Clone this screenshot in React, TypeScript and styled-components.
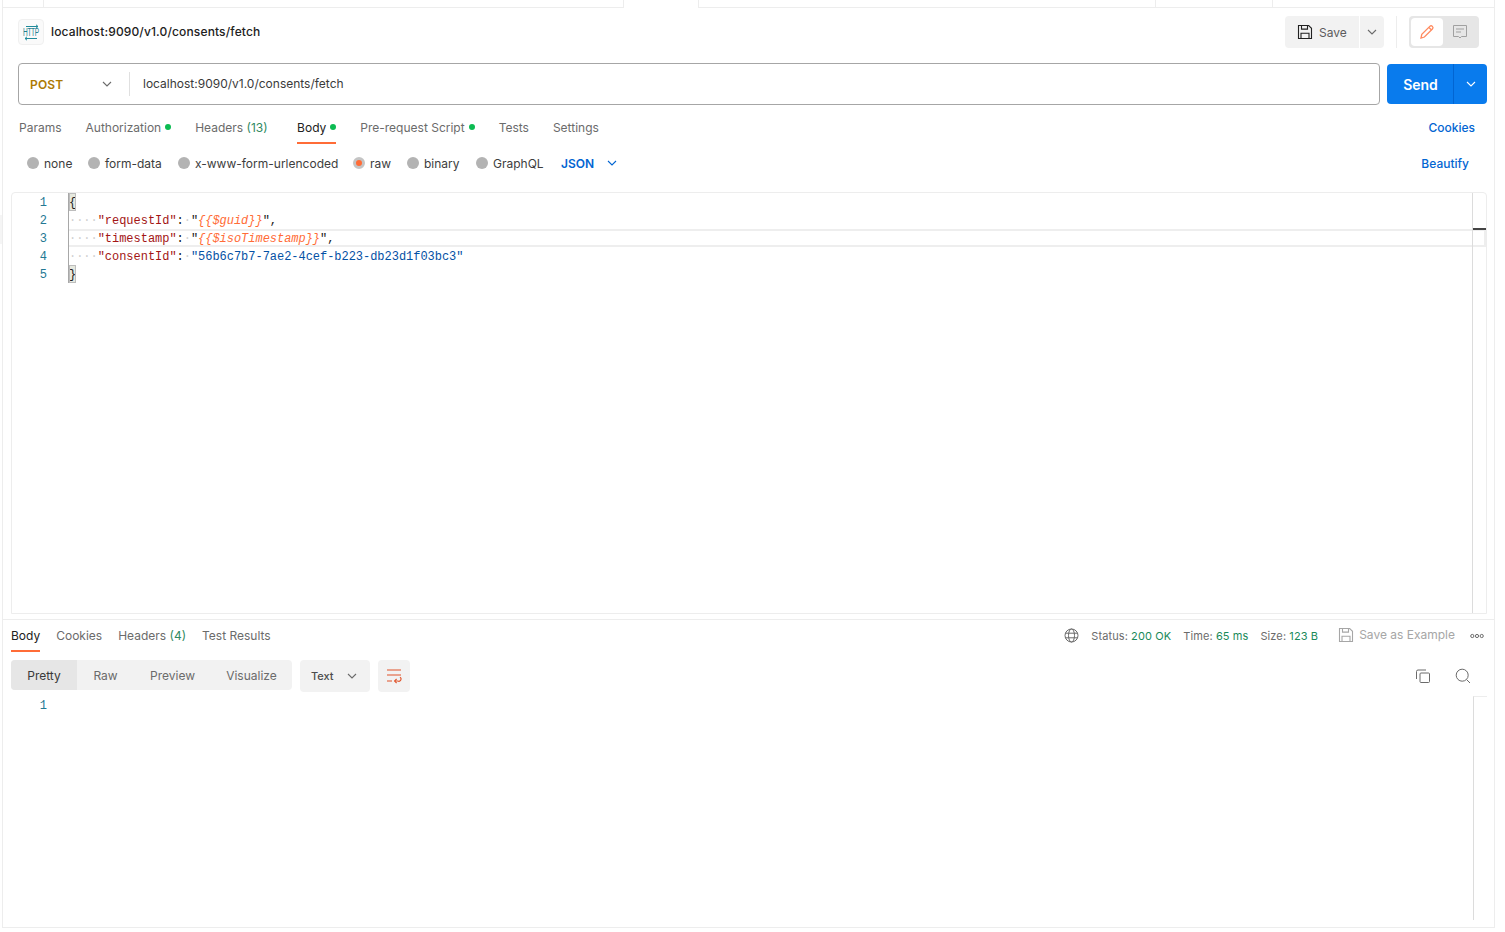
import React from "react";
import styled, { createGlobalStyle } from "styled-components";

const Global = createGlobalStyle`
  html, body { margin: 0; padding: 0; background: #fff; }
  body { font-family: Inter, "Liberation Sans", sans-serif; font-size: 12px; color: #6b6b6b; }
  * { box-sizing: border-box; }
`;

const Page = styled.div`position: relative; width: 1505px; height: 932px; overflow: hidden; background: #fff;`;
const Handle = styled.div`position: absolute; left: 0; top: 215px; width: 2px; height: 29px; background: #f5f5f5;`;
const Frame = styled.div`
  margin-left: 2px; width: 1493px; height: 928px;
  border-left: 1px solid #ededed; border-right: 1px solid #ededed; border-bottom: 1px solid #ededed;
  display: flex; flex-direction: column;
`;

const TabStrip = styled.div`display: flex; height: 8px; flex: none;`;
const StripCell = styled.div<{ $w?: number; $active?: boolean }>`
  flex: ${p => (p.$w ? `0 0 ${p.$w}px` : "1")};
  border-bottom: ${p => (p.$active ? "none" : "1px solid #ededed")};
  border-right: ${p => (p.$w ? "1px solid #ededed" : "none")};
`;

const Header = styled.div`height: 48px; flex: none; display: flex; align-items: center; padding: 0 15px; justify-content: space-between;`;
const Crumb = styled.div`display: flex; align-items: center; gap: 7px;`;
const HttpIcon = styled.div`
  width: 26px; height: 26px; border: 1px solid #f0f0f0; border-radius: 4px; background: #fafafa;
  display: flex; flex-direction: column; align-items: center; justify-content: center;
`;
const HttpLabel = styled.span`
  font-family: "Liberation Sans", sans-serif; font-size: 10px; line-height: 9px; height: 9px; color: #1f7f8f;
  letter-spacing: -0.6px; margin: -1px 0; transform: scaleX(0.66);
`;
const Title = styled.span`font-size: 12px; font-weight: 500; color: #212121; letter-spacing: 0.14px; padding-bottom: 1px;`;
const Actions = styled.div`display: flex; align-items: center;`;
const SaveBtn = styled.div`
  width: 74px; height: 32px; background: #f2f2f2; border-radius: 4px 0 0 4px; display: flex; align-items: center;
  padding-left: 12px; gap: 6px; color: #5c5c5c; font-size: 12px; margin-right: 1px;
`;
const SaveCaret = styled.div`
  width: 24px; height: 32px; background: #f2f2f2; border-radius: 0 4px 4px 0;
  display: flex; align-items: center; justify-content: center;
`;
const VDivider = styled.div`width: 1px; height: 32px; background: #ededed; margin: 0 12px;`;
const Toggle = styled.div`
  width: 70px; height: 32px; background: #e6e6e6; border-radius: 4px; padding: 2px; display: flex; align-items: center;
`;
const ToggleOn = styled.div`
  width: 32px; height: 28px; background: #fff; border-radius: 4px; display: flex; align-items: center; justify-content: center;
`;
const ToggleOff = styled.div`flex: 1; height: 28px; display: flex; align-items: center; justify-content: center;`;

const UrlRow = styled.div`flex: none; margin-top: 7px; padding: 0 7px 0 15px; display: flex; align-items: center; gap: 7px; height: 42px;`;
const UrlBar = styled.div`
  flex: 1; height: 42px; border: 1px solid #a6a6a6; border-radius: 4px; display: flex; align-items: center;
`;
const Method = styled.div`
  width: 111px; height: 24px; padding-left: 11px; padding-right: 16px; display: flex; align-items: center; justify-content: space-between;
  border-right: 1px solid #e0e0e0; font-size: 12px; font-weight: 600; color: #ad7a03; letter-spacing: 0.2px;
`;
const UrlText = styled.div`padding-left: 13px; padding-bottom: 2px; font-size: 12px; color: #3a3a3a;`;
const SendBtn = styled.div`
  width: 100px; height: 40px; background: #097bed; border-radius: 4px; display: flex; color: #fff; font-size: 14px; font-weight: 600;
`;
const SendMain = styled.div`flex: 0 0 67px; border-right: 1px solid #0265d2; display: flex; align-items: center; justify-content: center; padding-left: 1px;`;
const SendCaret = styled.div`flex: 1; display: flex; align-items: center; justify-content: center;`;

const ReqTabs = styled.div`flex: none; height: 39px; padding: 0 19px 0 16px; display: flex; align-items: stretch; gap: 24px;`;
const ReqTab = styled.div<{ $active?: boolean; $extra?: number }>`
  display: flex; align-items: center; gap: 4px; height: 39px; padding-top: 7px; margin-right: ${p => p.$extra || 0}px;
  color: ${p => (p.$active ? "#212121" : "#6b6b6b")};
  border-bottom: 2px solid ${p => (p.$active ? "#ff6c37" : "transparent")};
`;
const Dot = styled.span`width: 6px; height: 6px; border-radius: 50%; background: #0cbb52; margin-left: 0;`;
const Num = styled.span`color: #2f8a62;`;
const LinkBtn = styled.div<{ $flat?: boolean }>`
  margin-left: auto; display: flex; align-items: center; color: #0265d2; font-weight: 500; padding-top: ${p => (p.$flat ? 0 : 6)}px;
`;

const RadioRow = styled.div`flex: none; height: 38px; padding: 0 25px 0 24px; display: flex; align-items: center; position: relative;`;
const RadioItem = styled.div<{ $w: number }>`flex: 0 0 ${p => p.$w}px; display: flex; align-items: center; gap: 5px; color: #3d3d3d;`;
const RadioDot = styled.span<{ $on?: boolean }>`
  width: 12px; height: 12px; border-radius: 50%; background: ${p => (p.$on ? "#ff6c37" : "#b3b3b3")};
  border: ${p => (p.$on ? "3px solid #c4c4c4" : "none")}; flex: none;
`;
const JsonSel = styled.div`display: flex; align-items: center; gap: 12px; color: #0265d2; font-weight: 600;`;

const Editor = styled.div`
  flex: none; height: 422px; margin: 10px 7px 0 8px; border: 1px solid #ededed; border-radius: 4px 4px 0 0; display: flex; position: relative;
`;
const Gutter = styled.div`flex: 0 0 56px; padding-right: 21px; font-family: "Liberation Mono", monospace; font-size: 12px; color: #237893; text-align: right;`;
const GutterNum = styled.div`height: 18px; line-height: 20px;`;
const CodeCol = styled.div`flex: 1; font-family: "Liberation Mono", monospace; font-size: 12px; letter-spacing: -0.03px; color: #212121; border-left: 1px solid #a8a8a8; height: 90px;`;
const Line = styled.div<{ $cur?: boolean }>`
  height: 18px; white-space: pre; line-height: ${p => (p.$cur ? "16px" : "20px")};
  ${p => p.$cur && "border: 2px solid #eeeeee; border-left: none;"}
`;
const Bracket = styled.span`background: #e6e9df; outline: 1px solid #bdbdbd; outline-offset: -1px; display: inline-block; height: 18px; line-height: 20px; vertical-align: top;`;
const Ws = styled.span`color: #d0d0d0;`;
const Key = styled.span`color: #a31515;`;
const Val = styled.span`color: #0451a5;`;
const Var = styled.span`color: #ff6c37; font-style: italic;`;
const Ruler = styled.div`position: absolute; right: 0; top: 0; bottom: 0; width: 14px; border-left: 1px solid #dcdcdc;`;
const RulerMark = styled.div`margin-top: 35px; height: 2px; background: #444;`;

const Response = styled.div`flex: 1; margin-top: 5px; border-top: 1px solid #ededed; display: flex; flex-direction: column;`;
const ResBar = styled.div`flex: none; height: 32px; padding: 0 10px 0 8px; display: flex; align-items: stretch;`;
const ResTabs = styled.div`display: flex; gap: 16px;`;
const ResTab = styled.div<{ $active?: boolean }>`
  height: 32px; display: flex; align-items: center; padding-top: 1px;
  color: ${p => (p.$active ? "#212121" : "#6b6b6b")};
  border-bottom: 2px solid ${p => (p.$active ? "#ff6c37" : "transparent")};
`;
const Meta = styled.div`margin-left: auto; display: flex; align-items: center; font-size: 11px; color: #6b6b6b; letter-spacing: 0.1px; padding-bottom: 1px;`;
const MetaItem = styled.span<{ $mr: number }>`margin-right: ${p => p.$mr}px; white-space: nowrap;`;
const Good = styled.span`color: #1a8a5a;`;
const SaveEx = styled.div`display: flex; align-items: center; gap: 5px; color: #a6a6a6; font-size: 12px; letter-spacing: 0; margin-right: 15px; padding-bottom: 2px;`;
const IconSlot = styled.span<{ $mr: number }>`display: flex; margin-right: ${p => p.$mr}px;`;

const ResTools = styled.div`flex: none; margin-top: 8px; height: 32px; padding: 0 23px 0 8px; display: flex; gap: 8px; align-items: flex-start;`;
const Segment = styled.div`display: flex; height: 30px; background: #f2f2f2; border-radius: 4px; overflow: hidden; width: 281px;`;
const Seg = styled.div<{ $active?: boolean; $w: number }>`
  flex: 0 0 ${p => p.$w}px; display: flex; align-items: center; justify-content: center;
  background: ${p => (p.$active ? "#e6e6e6" : "transparent")}; color: ${p => (p.$active ? "#3a3a3a" : "#6b6b6b")};
`;
const FormatSel = styled.div`
  width: 70px; height: 32px; background: #f2f2f2; border-radius: 4px; display: flex; align-items: center; justify-content: space-between;
  padding: 0 12px 0 11px; color: #4d4d4d; font-size: 11px; font-weight: 500;
`;
const WrapBtn = styled.div`width: 32px; height: 32px; background: #f2f2f2; border-radius: 4px; display: flex; align-items: center; justify-content: center;`;
const ToolIcons = styled.div`margin-left: auto; display: flex; align-items: center; gap: 24px; height: 32px;`;

const ResBody = styled.div`flex: none; margin-top: 4px; height: 224px; display: flex; justify-content: space-between; padding-right: 7px;`;
const ResLine = styled.div`font-family: "Liberation Mono", monospace; font-size: 12px; line-height: 20px; color: #237893; width: 44px; text-align: right;`;
const ResScroll = styled.div`width: 14px; border-left: 1px solid #dcdcdc; border-top: 1px solid #ededed;`;

const Chevron = ({ color = "#6b6b6b" }: { color?: string }) => (
  <svg width="12" height="12" viewBox="0 0 12 12" fill="none" stroke={color} strokeWidth="1.1"><path d="M2 4l4 4 4-4" /></svg>
);
const SaveIcon = ({ color = "#212121" }: { color?: string }) => (
  <svg width="16" height="16" viewBox="0 0 16 16" fill="none" stroke={color} strokeWidth="1.1">
    <path d="M1.5 1.5h10.2l2.8 2.8v10.2h-13z" /><path d="M4.5 1.5v3.6h6V1.5" /><path d="M4 14.5V9.2h8v5.3" />
  </svg>
);

export default function App() {
  return (
    <Page>
      <Global />
      <Handle />
      <Frame>
        <TabStrip>
          <StripCell $w={41} />
          <StripCell $w={580} />
          <StripCell $w={75} $active />
          <StripCell $w={457} />
          <StripCell $w={117} />
          <StripCell />
        </TabStrip>

        <Header>
          <Crumb>
            <HttpIcon>
              <svg width="16" height="5" viewBox="0 0 16 5" fill="none" stroke="#1f8a9a" strokeWidth="1">
                <path d="M3 2.5h12M13 .8l2 1.7-2 1.7" />
              </svg>
              <HttpLabel>HTTP</HttpLabel>
              <svg width="16" height="5" viewBox="0 0 16 5" fill="none" stroke="#1f8a9a" strokeWidth="1">
                <path d="M14 2.5H2M4 .8L2 2.5l2 1.7" />
              </svg>
            </HttpIcon>
            <Title>localhost:9090/v1.0/consents/fetch</Title>
          </Crumb>
          <Actions>
            <SaveBtn><SaveIcon />Save</SaveBtn>
            <SaveCaret><Chevron /></SaveCaret>
            <VDivider />
            <Toggle>
              <ToggleOn>
                <svg width="16" height="16" viewBox="0 0 16 16" fill="none" stroke="#ff8a5f" strokeWidth="1.3">
                  <path d="M2 14l.8-3.6 8-8a1.7 1.7 0 012.6 2.6l-8 8z" /><path d="M10 3.5l2.5 2.5" />
                </svg>
              </ToggleOn>
              <ToggleOff>
                <svg width="16" height="16" viewBox="0 0 16 16" fill="none" stroke="#a0a0a0" strokeWidth="1">
                  <path d="M1.5 1.5h13v11H9.5L8 14l-1.5-1.5h-5z" /><path d="M4 5h8M4 8h5" />
                </svg>
              </ToggleOff>
            </Toggle>
          </Actions>
        </Header>

        <UrlRow>
          <UrlBar>
            <Method>POST<Chevron /></Method>
            <UrlText>localhost:9090/v1.0/consents/fetch</UrlText>
          </UrlBar>
          <SendBtn>
            <SendMain>Send</SendMain>
            <SendCaret><Chevron color="#fff" /></SendCaret>
          </SendBtn>
        </UrlRow>

        <ReqTabs>
          <ReqTab>Params</ReqTab>
          <ReqTab>Authorization<Dot /></ReqTab>
          <ReqTab $extra={5.5}><span>Headers <Num>(13)</Num></span></ReqTab>
          <ReqTab $active>Body<Dot /></ReqTab>
          <ReqTab>Pre-request Script<Dot /></ReqTab>
          <ReqTab>Tests</ReqTab>
          <ReqTab>Settings</ReqTab>
          <LinkBtn>Cookies</LinkBtn>
        </ReqTabs>

        <RadioRow>
          <RadioItem $w={61}><RadioDot />none</RadioItem>
          <RadioItem $w={90}><RadioDot />form-data</RadioItem>
          <RadioItem $w={175}><RadioDot />x-www-form-urlencoded</RadioItem>
          <RadioItem $w={54}><RadioDot $on />raw</RadioItem>
          <RadioItem $w={69}><RadioDot />binary</RadioItem>
          <RadioItem $w={85}><RadioDot />GraphQL</RadioItem>
          <JsonSel>JSON<Chevron color="#0265d2" /></JsonSel>
          <LinkBtn $flat>Beautify</LinkBtn>
        </RadioRow>

        <Editor>
          <Gutter>
            <GutterNum>1</GutterNum><GutterNum>2</GutterNum><GutterNum>3</GutterNum><GutterNum>4</GutterNum><GutterNum>5</GutterNum>
          </Gutter>
          <CodeCol>
            <Line><Bracket>{"{"}</Bracket></Line>
            <Line><Ws>····</Ws><Key>"requestId"</Key>:<Ws>·</Ws>"<Var>{"{{$guid}}"}</Var>",</Line>
            <Line $cur><Ws>····</Ws><Key>"timestamp"</Key>:<Ws>·</Ws>"<Var>{"{{$isoTimestamp}}"}</Var>",</Line>
            <Line><Ws>····</Ws><Key>"consentId"</Key>:<Ws>·</Ws><Val>"56b6c7b7-7ae2-4cef-b223-db23d1f03bc3"</Val></Line>
            <Line><Bracket>{"}"}</Bracket></Line>
          </CodeCol>
          <Ruler><RulerMark /></Ruler>
        </Editor>

        <Response>
          <ResBar>
            <ResTabs>
              <ResTab $active>Body</ResTab>
              <ResTab>Cookies</ResTab>
              <ResTab><span>Headers <Num>(4)</Num></span></ResTab>
              <ResTab>Test Results</ResTab>
            </ResTabs>
            <Meta>
              <IconSlot $mr={12}>
                <svg width="15" height="15" viewBox="0 0 15 15" fill="none" stroke="#6b6b6b" strokeWidth="1">
                  <circle cx="7.5" cy="7.5" r="6.5" /><ellipse cx="7.5" cy="7.5" rx="3" ry="6.5" /><path d="M1.4 5.2h12.2M1.4 9.8h12.2" />
                </svg>
              </IconSlot>
              <MetaItem $mr={12}>Status: <Good>200 OK</Good></MetaItem>
              <MetaItem $mr={12}>Time: <Good>65 ms</Good></MetaItem>
              <MetaItem $mr={20}>Size: <Good>123 B</Good></MetaItem>
              <SaveEx><SaveIcon color="#a6a6a6" />Save as Example</SaveEx>
              <svg width="14" height="6" viewBox="0 0 14 6" fill="none" stroke="#6b6b6b" strokeWidth="1">
                <circle cx="2.3" cy="3" r="1.6" /><circle cx="7" cy="3" r="1.6" /><circle cx="11.7" cy="3" r="1.6" />
              </svg>
            </Meta>
          </ResBar>

          <ResTools>
            <Segment>
              <Seg $active $w={66}>Pretty</Seg>
              <Seg $w={57}>Raw</Seg>
              <Seg $w={77}>Preview</Seg>
              <Seg $w={81}>Visualize</Seg>
            </Segment>
            <FormatSel>Text<Chevron /></FormatSel>
            <WrapBtn>
              <svg width="16" height="16" viewBox="0 0 16 16" fill="none" stroke="#e0532a" strokeWidth="1.1">
                <path d="M1 2h14M1 7h14M1 13h5" /><path d="M14 9.2a2.2 2.2 0 01-2.2 3.8H8.8" /><path d="M10.6 11l-2 2 2 2" />
              </svg>
            </WrapBtn>
            <ToolIcons>
              <svg width="16" height="16" viewBox="0 0 16 16" fill="none" stroke="#6b6b6b" strokeWidth="1">
                <rect x="5" y="5" width="9.5" height="9.5" rx="1" /><path d="M11 2H3a1.5 1.5 0 00-1.5 1.5V11" />
              </svg>
              <svg width="16" height="16" viewBox="0 0 16 16" fill="none" stroke="#6b6b6b" strokeWidth="1">
                <circle cx="7.2" cy="7.2" r="6" /><path d="M11.6 11.6l3.4 3.4" />
              </svg>
            </ToolIcons>
          </ResTools>

          <ResBody>
            <ResLine>1</ResLine>
            <ResScroll />
          </ResBody>
        </Response>
      </Frame>
    </Page>
  );
}
